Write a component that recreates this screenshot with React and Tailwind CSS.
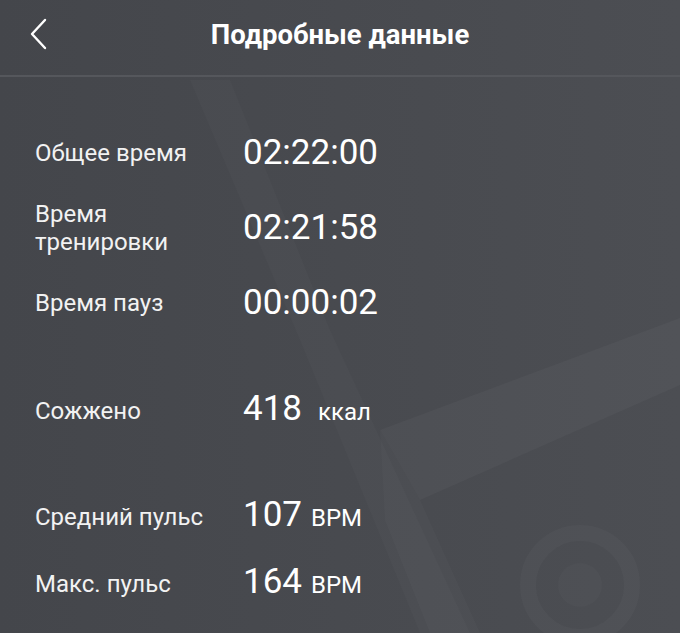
export default function App() {
  const rows = [
    { label: 'Общее время', value: '02:22:00', h: 'h-[75px]' },
    { label: ['Время', 'тренировки'], value: '02:21:58', h: 'h-[75px]' },
    { label: 'Время пауз', value: '00:00:02', h: 'h-[75px]' },
  ];

  return (
    <div
      className="relative w-[680px] h-[633px] overflow-hidden bg-gradient-to-r from-[#44464b] to-[#4c4e53] text-white"
      style={{ fontFamily: 'Roboto, "Noto Sans", sans-serif' }}
    >
      {/* faint map shapes in the background */}
      <svg className="absolute inset-0 pointer-events-none" width="680" height="633" viewBox="0 0 680 633">
        <path d="M190 80 L230 80 L330 330 L470 633 L420 633 L300 340 Z" fill="#ffffff" opacity="0.02" />
        <path d="M380 430 L680 318 L680 385 L420 500 Z" fill="#ffffff" opacity="0.03" />
        <path d="M380 430 L420 500 L480 633 L430 633 L385 520 Z" fill="#ffffff" opacity="0.018" />
        <circle cx="580" cy="585" r="52" fill="none" stroke="#ffffff" strokeWidth="16" opacity="0.025" />
        <circle cx="580" cy="585" r="22" fill="#ffffff" opacity="0.02" />
      </svg>

      <div className="relative">
        <div className="flex items-center justify-center h-[77px] relative border-b-2 border-[#55575c]">
          <button className="absolute left-[24px] top-[14px] w-[28px] h-[40px] flex items-center justify-center">
            <svg width="20" height="32" viewBox="0 0 20 32" fill="none">
              <path d="M17 2 L4 16 L17 30" stroke="#ffffff" strokeWidth="2.4" strokeLinecap="round" strokeLinejoin="round" />
            </svg>
          </button>
          <h1 className="text-[27.5px] font-bold mt-[-6px]">Подробные данные</h1>
        </div>

        <div className="pl-[35px] pt-[38px]">
          {rows.map((r, i) => (
            <div key={i} className={`flex items-center ${r.h}`}>
              <div className="w-[208px] text-[24px] leading-[28px] text-[#f2f2f2]">
                {Array.isArray(r.label) ? r.label.map((l) => <div key={l}>{l}</div>) : r.label}
              </div>
              <div className="text-[35px] leading-none">{r.value}</div>
            </div>
          ))}

          <div className="flex items-center h-[75px] mt-[33px]">
            <div className="w-[208px] text-[24px] text-[#f2f2f2]">Сожжено</div>
            <div className="flex items-baseline">
              <span className="text-[35px] leading-none">418</span>
              <span className="text-[24px] ml-[16px]">ккал</span>
            </div>
          </div>

          <div className="flex items-center h-[67px] mt-[35px]">
            <div className="w-[208px] text-[24px] text-[#f2f2f2]">Средний пульс</div>
            <div className="flex items-baseline">
              <span className="text-[35px] leading-none">107</span>
              <span className="text-[24px] ml-[9px]">BPM</span>
            </div>
          </div>

          <div className="flex items-center h-[67px]">
            <div className="w-[208px] text-[24px] text-[#f2f2f2]">Макс. пульс</div>
            <div className="flex items-baseline">
              <span className="text-[35px] leading-none">164</span>
              <span className="text-[24px] ml-[9px]">BPM</span>
            </div>
          </div>
        </div>
      </div>
    </div>
  );
}
